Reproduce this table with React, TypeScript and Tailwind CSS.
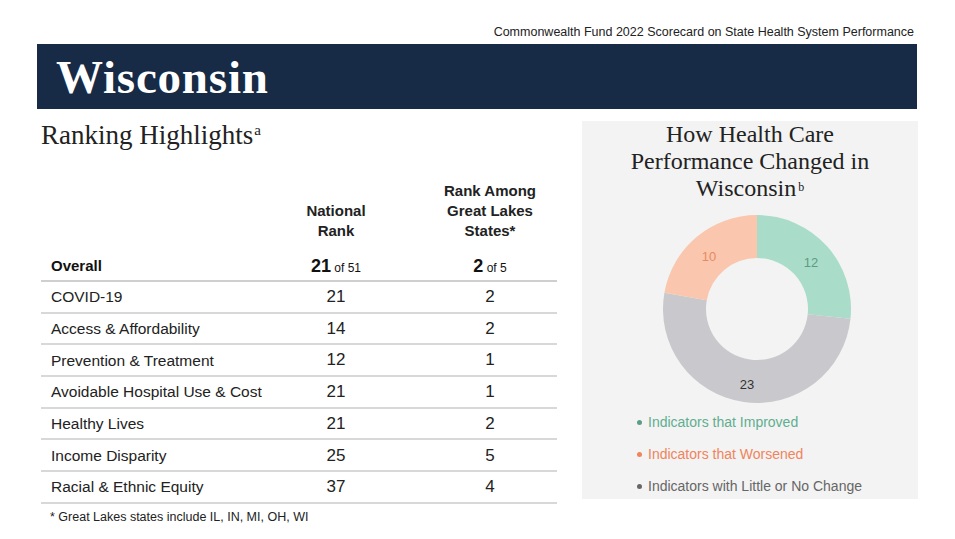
import React from "react";

const ROWS = [
  ["COVID-19", "21", "2"],
  ["Access & Affordability", "14", "2"],
  ["Prevention & Treatment", "12", "1"],
  ["Avoidable Hospital Use & Cost", "21", "1"],
  ["Healthy Lives", "21", "2"],
  ["Income Disparity", "25", "5"],
  ["Racial & Ethnic Equity", "37", "4"],
];

const SERIF = "font-['Liberation_Serif','Times_New_Roman',serif]";

function arc(cx: number, cy: number, r0: number, r1: number, a0: number, a1: number) {
  const p = (r: number, a: number) => {
    const rad = ((a - 90) * Math.PI) / 180;
    return [cx + r * Math.cos(rad), cy + r * Math.sin(rad)];
  };
  const large = a1 - a0 > 180 ? 1 : 0;
  const [x1, y1] = p(r1, a0);
  const [x2, y2] = p(r1, a1);
  const [x3, y3] = p(r0, a1);
  const [x4, y4] = p(r0, a0);
  return `M${x1} ${y1} A${r1} ${r1} 0 ${large} 1 ${x2} ${y2} L${x3} ${y3} A${r0} ${r0} 0 ${large} 0 ${x4} ${y4} Z`;
}

function Donut() {
  const total = 45;
  const g = (12 / total) * 360;
  const gr = g + (23 / total) * 360;
  return (
    <svg width="190" height="190" viewBox="0 0 190 190">
      <path d={arc(95, 95, 51, 94, 0, g)} fill="#a9dcc9" />
      <path d={arc(95, 95, 51, 94, g, gr)} fill="#c9c9cd" />
      <path d={arc(95, 95, 51, 94, gr, 360)} fill="#fac6ad" />
      <text x="149" y="53" fontSize="13" fill="#5d9c84" textAnchor="middle" fontFamily="Liberation Sans, Arial, sans-serif">12</text>
      <text x="47" y="47" fontSize="13" fill="#e88a64" textAnchor="middle" fontFamily="Liberation Sans, Arial, sans-serif">10</text>
      <text x="85" y="175" fontSize="13" fill="#333" textAnchor="middle" fontFamily="Liberation Sans, Arial, sans-serif">23</text>
    </svg>
  );
}

export default function App() {
  return (
    <div className="w-[955px] h-[539px] bg-white overflow-hidden font-['Liberation_Sans',Arial,sans-serif] text-[#1a1a1a]">
      <div className="pt-[24px] pr-[41px] text-right text-[12.5px] leading-[16px] text-[#222]">
        Commonwealth Fund 2022 Scorecard on State Health System Performance
      </div>
      <div className="mx-[37px] mt-[4px] w-[880px] h-[65px] bg-[#172a46] flex items-center pl-[19px]">
        <span className={`${SERIF} text-white font-bold text-[47px] leading-none tracking-[0.8px] mt-[2px]`}>Wisconsin</span>
      </div>
      <div className="flex mt-[12px]">
        <div className="ml-[41px] w-[516px] shrink-0">
          <div className={`${SERIF} text-[27px] leading-[28px] text-[#222]`}>
            Ranking Highlights<sup className="text-[15px] relative -top-[9px] ml-[1px]">a</sup>
          </div>
          <div className="mt-[32px] flex text-[15px] font-bold leading-[20px] text-[#222]">
            <div className="w-[246px] shrink-0" />
            <div className="w-[98px] shrink-0 text-center pt-[20px]">National<br />Rank</div>
            <div className="w-[172px] shrink-0 pl-[38px] text-center">Rank Among<br />Great Lakes<br />States*</div>
          </div>
          <div className="h-[33px] flex items-center border-b-[2px] border-[#cfcfcf] text-[#111] mt-[8px] pt-[3px]">
            <div className="w-[246px] shrink-0 pl-[10px] font-bold text-[15px]">Overall</div>
            <div className="w-[98px] shrink-0 text-center"><span className="font-bold text-[18px]">21</span><span className="text-[12px]"> of 51</span></div>
            <div className="w-[172px] shrink-0 pl-[38px] text-center"><span className="font-bold text-[18px]">2</span><span className="text-[12px]"> of 5</span></div>
          </div>
          {ROWS.map(([label, n, g]) => (
            <div key={label} className="h-[31.7px] flex items-center border-b-[2px] border-[#d8d8d8] text-[16px] text-[#222]">
              <div className="w-[246px] shrink-0 pl-[10px] text-[15.5px]">{label}</div>
              <div className="w-[98px] shrink-0 text-center text-[17px]">{n}</div>
              <div className="w-[172px] shrink-0 pl-[38px] text-center text-[17px]">{g}</div>
            </div>
          ))}
          <div className="pl-[9px] pt-[4px] text-[12.5px] text-[#222]">* Great Lakes states include IL, IN, MI, OH, WI</div>
        </div>
        <div className="ml-[25px] w-[336px] h-[378px] bg-[#f3f3f3] flex flex-col items-center">
          <div className={`${SERIF} text-[24px] leading-[27px] text-center text-[#222] pt-[0px]`}>
            How Health Care<br />Performance Changed in<br />Wisconsin<sup className="text-[12px] relative -top-[5px] ml-[2px]">b</sup>
          </div>
          <div className="mt-[12px] ml-[14px]">
            <Donut />
          </div>
          <div className="self-start ml-[55px] mt-[8px] flex flex-col gap-[11px] text-[14px] leading-[21px]">
            <div className="flex items-center text-[#5fae8f]"><span className="w-[5px] h-[5px] rounded-full bg-[#5b9e86] mr-[6px]" />Indicators that Improved</div>
            <div className="flex items-center text-[#f0845c]"><span className="w-[5px] h-[5px] rounded-full bg-[#f0845c] mr-[6px]" />Indicators that Worsened</div>
            <div className="flex items-center text-[#666]"><span className="w-[5px] h-[5px] rounded-full bg-[#666] mr-[6px]" />Indicators with Little or No Change</div>
          </div>
        </div>
      </div>
    </div>
  );
}
